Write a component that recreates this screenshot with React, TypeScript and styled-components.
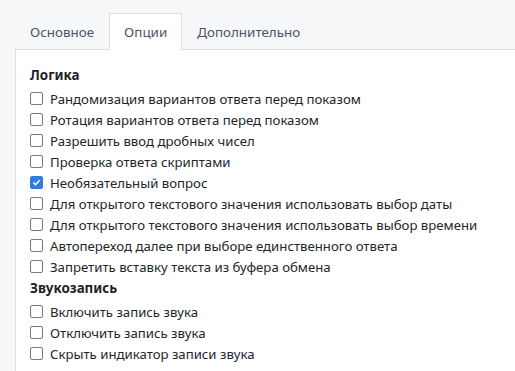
import React from 'react';
import styled, { createGlobalStyle } from 'styled-components';

const GlobalStyle = createGlobalStyle`
    body {
        margin: 0;
        background: #f6f7f9;
        font-family: "Noto Sans", "Open Sans", sans-serif;
    }
`

const Page = styled.div`
    width: 515px;
    height: 371px;
    overflow: hidden;
    padding: 13px 0 0 15px;
    box-sizing: border-box;
`

const Tabs = styled.div`
    display: flex;
    height: 36px;
`

const Tab = styled.div<{ active?: boolean }>`
    display: flex;
    align-items: center;
    padding: 0 14px;
    font-size: 13.4px;
    color: #4c5566;
    background: ${p => (p.active ? '#fff' : 'transparent')};
    border: 1px solid ${p => (p.active ? '#dcdfe4' : 'transparent')};
    border-bottom: none;
    margin-bottom: -1px;
    position: relative;
    z-index: 1;
    cursor: pointer;
`

const Panel = styled.div`
    background: #fff;
    border-left: 1px solid #dcdfe4;
    border-top: 1px solid #dcdfe4;
    height: 400px;
    padding: 14px 0 0 14px;
    box-sizing: border-box;
`

const Heading = styled.div`
    font-weight: 700;
    font-size: 13.4px;
    color: #1f2329;
    height: 22px;
    line-height: 22px;
`

const List = styled.div`
    display: flex;
    flex-direction: column;
    margin-top: 2px;
`

const Row = styled.label`
    display: flex;
    align-items: center;
    gap: 7px;
    height: 21px;
    font-size: 13.2px;
    color: #22262b;
    white-space: nowrap;
`

const Box = styled.span<{ checked?: boolean }>`
    width: 13px;
    height: 13px;
    box-sizing: border-box;
    border-radius: 2px;
    border: 1px solid ${p => (p.checked ? '#2f7de1' : '#767880')};
    background: ${p => (p.checked ? '#2f7de1' : '#fff')};
    display: flex;
    align-items: center;
    justify-content: center;
    flex-shrink: 0;
`

function Check({ label, checked }: { label: string; checked?: boolean }) {
    return (
        <Row>
            <Box checked={checked}>
                {checked && (
                    <svg width="9" height="9" viewBox="0 0 9 9">
                        <path d="M1.5 4.6 L3.6 6.7 L7.6 2.2" fill="none" stroke="#fff" strokeWidth="1.6" />
                    </svg>
                )}
            </Box>
            {label}
        </Row>
    );
}

const logic = [
    'Рандомизация вариантов ответа перед показом',
    'Ротация вариантов ответа перед показом',
    'Разрешить ввод дробных чисел',
    'Проверка ответа скриптами',
    'Необязательный вопрос',
    'Для открытого текстового значения использовать выбор даты',
    'Для открытого текстового значения использовать выбор времени',
    'Автопереход далее при выборе единственного ответа',
    'Запретить вставку текста из буфера обмена',
];

const sound = [
    'Включить запись звука',
    'Отключить запись звука',
    'Скрыть индикатор записи звука',
];

export default function App() {
    return (
        <>
            <GlobalStyle />
            <Page>
                <Tabs>
                    <Tab>Основное</Tab>
                    <Tab active>Опции</Tab>
                    <Tab>Дополнительно</Tab>
                </Tabs>
                <Panel>
                    <Heading>Логика</Heading>
                    <List>
                        {logic.map(l => (
                            <Check key={l} label={l} checked={l === 'Необязательный вопрос'} />
                        ))}
                    </List>
                    <Heading>Звукозапись</Heading>
                    <List>
                        {sound.map(l => (
                            <Check key={l} label={l} />
                        ))}
                    </List>
                </Panel>
            </Page>
        </>
    );
}
